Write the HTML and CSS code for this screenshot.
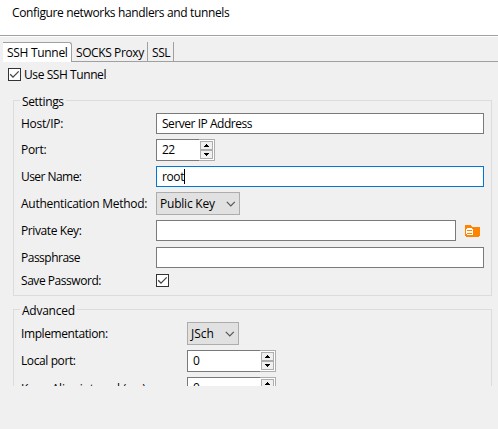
FILE: index.html
```html
<!DOCTYPE html>
<html lang="en">
<head>
<meta charset="utf-8">
<title>Network handlers</title>
<link rel="stylesheet" href="styles.css">
</head>
<body>
<header class="header"><span class="t-head">Configure networks handlers and tunnels</span></header>
<main class="content">
  <nav class="tabs">
    <div class="tab active"><span class="t-ssh">SSH Tunnel</span></div>
    <div class="tab socks"><span class="t-socks">SOCKS Proxy</span></div>
    <div class="tab ssl"><span class="t-ssl">SSL</span></div>
    <div class="tab-rest"></div>
  </nav>
  <label class="use">
    <svg class="check" viewBox="0 0 13 13"><rect x=".5" y=".5" width="12" height="12"/><path d="M2.2 6.3 5 9.1 10.7 3.4"/></svg>
    <span class="t-use">Use SSH Tunnel</span>
  </label>
  <section class="group settings">
    <h2 class="legend"><span class="t-set">Settings</span></h2>
    <div class="form">
      <label><span class="t-host">Host/IP:</span></label>
      <div class="input"><span class="t-server">Server IP Address</span></div>
      <label><span class="t-port">Port:</span></label>
      <div class="spinner"><span class="value">22</span><svg class="arrows" viewBox="0 0 16 22"><path class="edge" d="M0 .5H15.5V21.5H0"/><rect x="1.5" y="2.5" width="12" height="8"/><rect x="1.5" y="11.5" width="12" height="8"/><path class="tri" d="M5 8h5v-1h-1v-1h-1v-1h-1v1h-1v1h-1zM5 14h5v1h-1v1h-1v1h-1v-1h-1v-1h-1z"/></svg></div>
      <label><span class="t-user">User Name:</span></label>
      <div class="input focus"><span class="t-root">root</span><i class="caret"></i></div>
      <label><span class="t-auth">Authentication Method:</span></label>
      <div class="combo"><span class="t-public">Public Key</span><svg class="chevron" viewBox="0 0 10 6"><path d="m.8.8 4 4 4-4"/></svg></div>
      <label><span class="t-private">Private Key:</span></label>
      <div class="file"><div class="input"></div>
        <svg class="folder" viewBox="0 0 15 13"><path class="body" d="M0 0h6l1 2h8v9h-1v1H1v-1H0z"/><path class="db" d="M2 3h5v1h1v6H2V9H1V4h1z"/><path class="bands" d="M2 5.5h5M2 8.5h5"/></svg>
      </div>
      <label><span class="t-pass">Passphrase</span></label>
      <div class="input"></div>
      <label><span class="t-save">Save Password:</span></label>
      <svg class="check" viewBox="0 0 13 13"><rect x=".5" y=".5" width="12" height="12"/><path d="M2.2 6.3 5 9.1 10.7 3.4"/></svg>
    </div>
  </section>
  <section class="group advanced">
    <h2 class="legend"><span class="t-adv">Advanced</span></h2>
    <div class="form">
      <label><span class="t-impl">Implementation:</span></label>
      <div class="combo small"><span class="t-jsch">JSch</span><svg class="chevron" viewBox="0 0 10 6"><path d="m.8.8 4 4 4-4"/></svg></div>
      <label><span class="t-local">Local port:</span></label>
      <div class="spinner wide"><span class="value">0</span><svg class="arrows" viewBox="0 0 16 22"><path class="edge" d="M0 .5H15.5V21.5H0"/><rect x="1.5" y="2.5" width="12" height="8"/><rect x="1.5" y="11.5" width="12" height="8"/><path class="tri" d="M5 8h5v-1h-1v-1h-1v-1h-1v1h-1v1h-1zM5 14h5v1h-1v1h-1v1h-1v-1h-1v-1h-1z"/></svg></div>
      <label class="low"><span class="t-keep">Keep-Alive interval (ms)</span></label>
      <div class="spinner wide"><span class="value">0</span><svg class="arrows" viewBox="0 0 16 22"><path class="edge" d="M0 .5H15.5V21.5H0"/><rect x="1.5" y="2.5" width="12" height="8"/><rect x="1.5" y="11.5" width="12" height="8"/><path class="tri" d="M5 8h5v-1h-1v-1h-1v-1h-1v1h-1v1h-1zM5 14h5v1h-1v1h-1v1h-1v-1h-1v-1h-1z"/></svg></div>
    </div>
  </section>
</main>
</body>
</html>
```
FILE: styles.css
```css
* { box-sizing: border-box; }
body { margin: 0; width: 498px; height: 429px; overflow: hidden; background: #f0f0f0; color: #000; font: 12px/16px "Open Sans", "Noto Sans", sans-serif; white-space: nowrap; }
svg { display: block; flex: none; shape-rendering: crispEdges; }
.header { height: 36px; padding: 5px 0 0 12px; background: #fff; border-bottom: 1px solid #a0a0a0; }
.content { height: 350px; padding-top: 5px; overflow: hidden; border-top: 1px solid #fff; }
.tabs { display: flex; height: 20px; padding-left: 3px; }
.tab { height: 20px; padding: 3px 0 0 4px; border-right: 1px solid #a0a0a0; border-bottom: 1px solid #a0a0a0; }
.tab.active { width: 69px; background: #fff; border-top: 1px solid #a0a0a0; border-bottom: 0; padding-top: 2px; border-top-right-radius: 3px; }
.socks { width: 76px; }
.ssl { width: 26px; }
.tab-rest { flex: 1; border-bottom: 1px solid #a0a0a0; }
.use { display: flex; align-items: center; gap: 3px; height: 13px; margin: 6px 0 0 8px; }
.check { width: 13px; height: 13px; }
.check rect { fill: #fff; stroke: #333; }
.check path { fill: none; stroke: #444; stroke-width: 1.3; shape-rendering: auto; }
.group { width: 479px; margin-left: 13px; border: 1px solid #dcdcdc; padding-left: 7px; }
.settings { height: 196px; margin-top: 19px; }
.advanced { height: 120px; margin-top: 13px; }
.legend { width: fit-content; height: 12px; margin: -8px 0 0 -1px; padding: 0 2px; background: #f0f0f0; font-size: 12px; font-weight: 400; line-height: 17px; }
.form { display: grid; gap: 5px 0; align-items: start; }
.form label { display: flex; align-items: center; height: 100%; }
.form .low { padding-top: 2px; }
.settings .form { grid-template: 21px 22px 21px 23px 22px 22px 13px / 135px 328px; margin-top: 8px; }
.advanced .form { grid-template: 23px 22px 22px / 166px 200px; margin-top: 8px; }
.input { display: flex; align-items: center; height: 21px; padding-left: 5px; border: 1px solid #7a7a7a; background: #fff; }
.input.focus { border-color: #0078d7; }
.caret { width: 1px; height: 15px; background: #000; }
.spinner { display: flex; justify-content: space-between; width: 59px; height: 22px; background: #fff; }
.wide { width: 89px; }
.value { flex: 1; padding: 2px 0 0 5px; border: 1px solid #7a7a7a; border-right: 0; letter-spacing: -.5px; }
.arrows { width: 16px; height: 22px; }
.arrows rect { fill: #f0f0f0; stroke: #adadad; }
.arrows .edge { fill: none; stroke: #adadad; }
.tri { fill: #000; }
.combo { display: flex; align-items: center; justify-content: space-between; width: 84px; height: 23px; padding: 0 3px; background: #e1e1e1; border: 1px solid #adadad; }
.small { width: 52px; }
.chevron { width: 10px; height: 6px; shape-rendering: auto; fill: none; stroke: #555; stroke-width: 1.2; }
.file { display: flex; gap: 9px; }
.file .input { width: 300px; }
.folder { width: 15px; height: 13px; margin-top: 5px; }
.body { fill: #ff8500; }
.db { fill: #fff; }
.bands { fill: none; stroke: #ff8500; }
.t-head { letter-spacing: -.36px; }
.t-ssh { letter-spacing: -.3px; }
.t-socks { letter-spacing: -.4px; }
.t-ssl { letter-spacing: -.4px; }
.t-use { letter-spacing: -.42px; }
.t-set { letter-spacing: -.35px; }
.t-host { letter-spacing: -.25px; }
.t-server { letter-spacing: -.47px; }
.t-port { letter-spacing: -.3px; }
.t-user { letter-spacing: -.55px; }
.t-root { letter-spacing: -.4px; }
.t-auth { letter-spacing: -.28px; }
.t-public { letter-spacing: -.22px; }
.t-private { letter-spacing: -.4px; }
.t-pass { letter-spacing: -.5px; }
.t-save { letter-spacing: -.45px; }
.t-adv { letter-spacing: -.25px; }
.t-impl { letter-spacing: -.4px; }
.t-local { letter-spacing: -.4px; }
.t-keep { letter-spacing: -.25px; }
```
